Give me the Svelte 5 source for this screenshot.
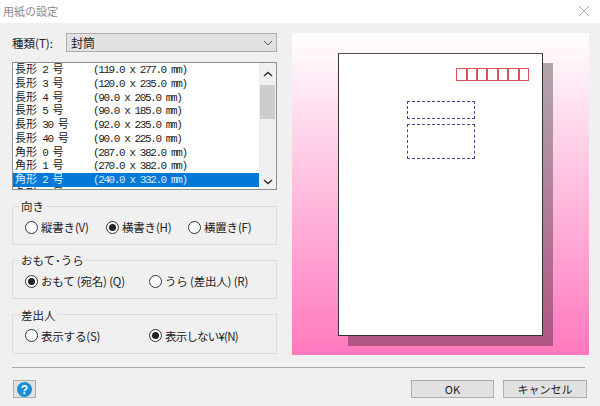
<script>
  const papers = [
    { kind: '長形', num: '2', size: '(119.0 x 277.0 mm)' },
    { kind: '長形', num: '3', size: '(120.0 x 235.0 mm)' },
    { kind: '長形', num: '4', size: '(90.0 x 205.0 mm)' },
    { kind: '長形', num: '5', size: '(90.0 x 185.0 mm)' },
    { kind: '長形', num: '30', size: '(92.0 x 235.0 mm)' },
    { kind: '長形', num: '40', size: '(90.0 x 225.0 mm)' },
    { kind: '角形', num: '0', size: '(287.0 x 382.0 mm)' },
    { kind: '角形', num: '1', size: '(270.0 x 382.0 mm)' },
    { kind: '角形', num: '2', size: '(240.0 x 332.0 mm)', selected: true },
    { kind: '角形', num: '3', size: '(216.0 x 277.0 mm)' }
  ];

  const groups = [
    {
      title: '向き',
      cls: 'narrow',
      options: [
        { label: '縦書き(V)' },
        { label: '横書き(H)', on: true },
        { label: '横置き(F)' }
      ]
    },
    {
      title: 'おもて･うら',
      cls: 'wide',
      options: [
        { label: 'おもて (宛名) (Q)', on: true },
        { label: 'うら (差出人) (R)' }
      ]
    },
    {
      title: '差出人',
      cls: 'wide',
      options: [
        { label: '表示する(S)' },
        { label: '表示しない¥(N)', on: true, tight: true }
      ]
    }
  ];
</script>

<div class="dialog">
  <header class="titlebar">
    <span class="title">用紙の設定</span>
    <svg class="close" width="12" height="12" viewBox="0 0 12 12">
      <path d="M1 1 L11 11 M11 1 L1 11" stroke="#a8a8a8" stroke-width="1" fill="none" />
    </svg>
  </header>

  <main class="content">
    <section class="left">
      <div class="type-row">
        <span class="type-label">種類(T):</span>
        <div class="select">
          <span>封筒</span>
          <svg width="10" height="6" viewBox="0 0 10 6">
            <path d="M1 1 L5 5 L9 1" stroke="#555" stroke-width="1" fill="none" />
          </svg>
        </div>
      </div>

      <div class="listbox">
        <div class="rows">
          {#each papers as p}
            <div class="row" class:selected={p.selected}>
              <span class="name"><span class="cjk">{p.kind}</span> {p.num} <span class="cjk">号</span></span>
              <span>{p.size}</span>
            </div>
          {/each}
        </div>
        <div class="scrollbar">
          <svg width="10" height="6" viewBox="0 0 10 6">
            <path d="M1 5 L5 1.5 L9 5" stroke="#333" stroke-width="1.6" fill="none" />
          </svg>
          <div class="thumb"></div>
          <svg class="down" width="10" height="6" viewBox="0 0 10 6">
            <path d="M1 1 L5 4.5 L9 1" stroke="#333" stroke-width="1.6" fill="none" />
          </svg>
        </div>
      </div>

      {#each groups as g}
        <fieldset class="group {g.cls}">
          <legend>{g.title}</legend>
          <div class="options">
            {#each g.options as o}
              <div class="option">
                <span class="radio" class:on={o.on}></span>
                <span class:tight={o.tight}>{o.label}</span>
              </div>
            {/each}
          </div>
        </fieldset>
      {/each}
    </section>

    <section class="preview">
      <div class="envelope">
        <div class="zip">
          {#each Array(7) as _}
            <span></span>
          {/each}
        </div>
        <div class="addr small"></div>
        <div class="addr large"></div>
      </div>
    </section>
  </main>

  <div class="rule"></div>

  <footer class="footer">
    <button class="help" aria-label="ヘルプ">
      <svg width="15" height="15" viewBox="0 0 15 15">
        <circle cx="7.5" cy="7.5" r="7.5" fill="#1b8fd6" />
        <text x="7.5" y="11.6" text-anchor="middle" class="qmark">?</text>
      </svg>
    </button>
    <div class="actions">
      <button class="ok">OK</button>
      <button class="cancel">キャンセル</button>
    </div>
  </footer>
</div>

<style>
  :global(body) {
    margin: 0;
  }

  .dialog {
    width: 600px;
    height: 406px;
    background: #f0f0f0;
    display: flex;
    flex-direction: column;
    overflow: hidden;
    font-family: "Noto Sans CJK JP", "Noto Sans", sans-serif;
    font-size: 11px;
    color: #222;
  }

  .titlebar {
    height: 23px;
    flex: none;
    background: #fff;
    display: flex;
    align-items: center;
    justify-content: space-between;
    padding: 0 10px 2px 3px;
    box-sizing: border-box;
  }

  .title {
    font-size: 11px;
    color: #8a8a8a;
  }

  .content {
    display: flex;
    gap: 15px;
    padding: 10px 0 0 12px;
    height: 334px;
    flex: none;
  }

  .left {
    width: 265px;
    flex: none;
  }

  .type-row {
    display: flex;
    align-items: center;
    height: 19px;
  }

  .type-label {
    width: 54px;
    flex: none;
    font-size: 11.5px;
  }

  .select {
    flex: 1;
    height: 19px;
    box-sizing: border-box;
    background: #e1e1e1;
    border: 1px solid #adadad;
    display: flex;
    align-items: center;
    justify-content: space-between;
    padding: 0 3px 0 4px;
    font-size: 12px;
  }

  .listbox {
    margin-top: 10px;
    height: 128px;
    box-sizing: border-box;
    background: #fff;
    border: 1px solid #8f8f8f;
    display: flex;
    overflow: hidden;
  }

  .rows {
    flex: 1;
    min-width: 0;
    overflow: hidden;
  }

  .row {
    height: 13.75px;
    line-height: 15px;
    display: flex;
    align-items: baseline;
    padding-left: 2px;
    font-family: "Liberation Mono", "Noto Sans CJK JP", monospace;
    font-size: 11px;
    letter-spacing: -1.4px;
    white-space: pre;
    color: #222;
  }

  .row.selected {
    background: #0078d7;
    color: #d8ecff;
  }

  .name {
    width: 78px;
    flex: none;
  }

  .cjk {
    font-family: "Noto Sans CJK JP", sans-serif;
    font-size: 11px;
    line-height: 1;
    letter-spacing: 0;
  }

  .scrollbar {
    width: 17px;
    flex: none;
    background: #f0f0f0;
    display: flex;
    flex-direction: column;
    align-items: center;
    padding-top: 8px;
    box-sizing: border-box;
  }

  .thumb {
    width: 15px;
    height: 34px;
    margin-top: 8px;
    background: #cdcdcd;
  }

  .down {
    margin-top: auto;
    margin-bottom: 4px;
  }

  .group {
    margin: 8px 0 0;
    padding: 0 0 0 12px;
    height: 47px;
    box-sizing: border-box;
    border: 1px solid #dcdcdc;
    min-width: 0;
  }

  .group legend {
    margin-left: -5px;
    padding: 0 1px;
    line-height: 16px;
    font-size: 11.5px;
  }

  .group + .group {
    margin-top: 7.3px;
  }

  .options {
    display: grid;
    height: 22px;
    margin-top: 2px;
    align-items: center;
  }

  .narrow .options {
    grid-template-columns: 81px 82px 1fr;
  }

  .wide .options {
    grid-template-columns: 124px 1fr;
  }

  .option {
    display: flex;
    align-items: center;
    gap: 3px;
    white-space: nowrap;
    font-size: 11.5px;
    letter-spacing: -0.2px;
  }

  .tight {
    letter-spacing: -0.8px;
  }

  .radio {
    width: 13px;
    height: 13px;
    box-sizing: border-box;
    border: 1px solid #333;
    border-radius: 50%;
    background: #fff;
    flex: none;
    display: flex;
    align-items: center;
    justify-content: center;
  }

  .radio.on::after {
    content: "";
    width: 7px;
    height: 7px;
    border-radius: 50%;
    background: #222;
  }

  .preview {
    width: 297px;
    height: 322px;
    flex: none;
    background: linear-gradient(#fff, #ff78bd);
    padding: 20px 0 0 46px;
    box-sizing: border-box;
  }

  .envelope {
    width: 205px;
    height: 283px;
    box-sizing: border-box;
    background: #fff;
    border: 1px solid #333;
    border-top-color: #555;
    box-shadow: 10px 10px 0 rgba(0, 0, 0, 0.31);
    display: flex;
    flex-direction: column;
  }

  .zip {
    display: flex;
    align-self: flex-end;
    margin: 14px 13px 0 0;
  }

  .zip span {
    width: 10.4px;
    height: 13px;
    box-sizing: border-box;
    border: 1.5px solid #d9535c;
  }

  .addr {
    width: 68px;
    margin-left: 68px;
    box-sizing: border-box;
    border: 1px dashed #46468c;
  }

  .addr.small {
    height: 18px;
    margin-top: 20px;
  }

  .addr.large {
    height: 35px;
    margin-top: 5px;
  }

  .rule {
    height: 1px;
    flex: none;
    margin: 0 15px 0 12px;
    background: #a8a8a8;
  }

  .footer {
    display: flex;
    justify-content: space-between;
    padding: 12px 13px 0 13px;
  }

  button {
    box-sizing: content-box;
    padding: 0;
    background: #e1e1e1;
    border: 1px solid #adadad;
    font-family: inherit;
    font-size: 11px;
    color: #222;
    line-height: 1;
  }

  .help {
    width: 21px;
    height: 16px;
    display: flex;
    align-items: center;
    justify-content: center;
  }

  .qmark {
    font-family: "Liberation Sans", sans-serif;
    font-size: 12px;
    font-weight: 700;
    fill: #fff;
  }

  .actions {
    display: flex;
    gap: 9px;
  }

  .ok {
    width: 81px;
    height: 16px;
  }

  .cancel {
    width: 82px;
    height: 16px;
  }
</style>
